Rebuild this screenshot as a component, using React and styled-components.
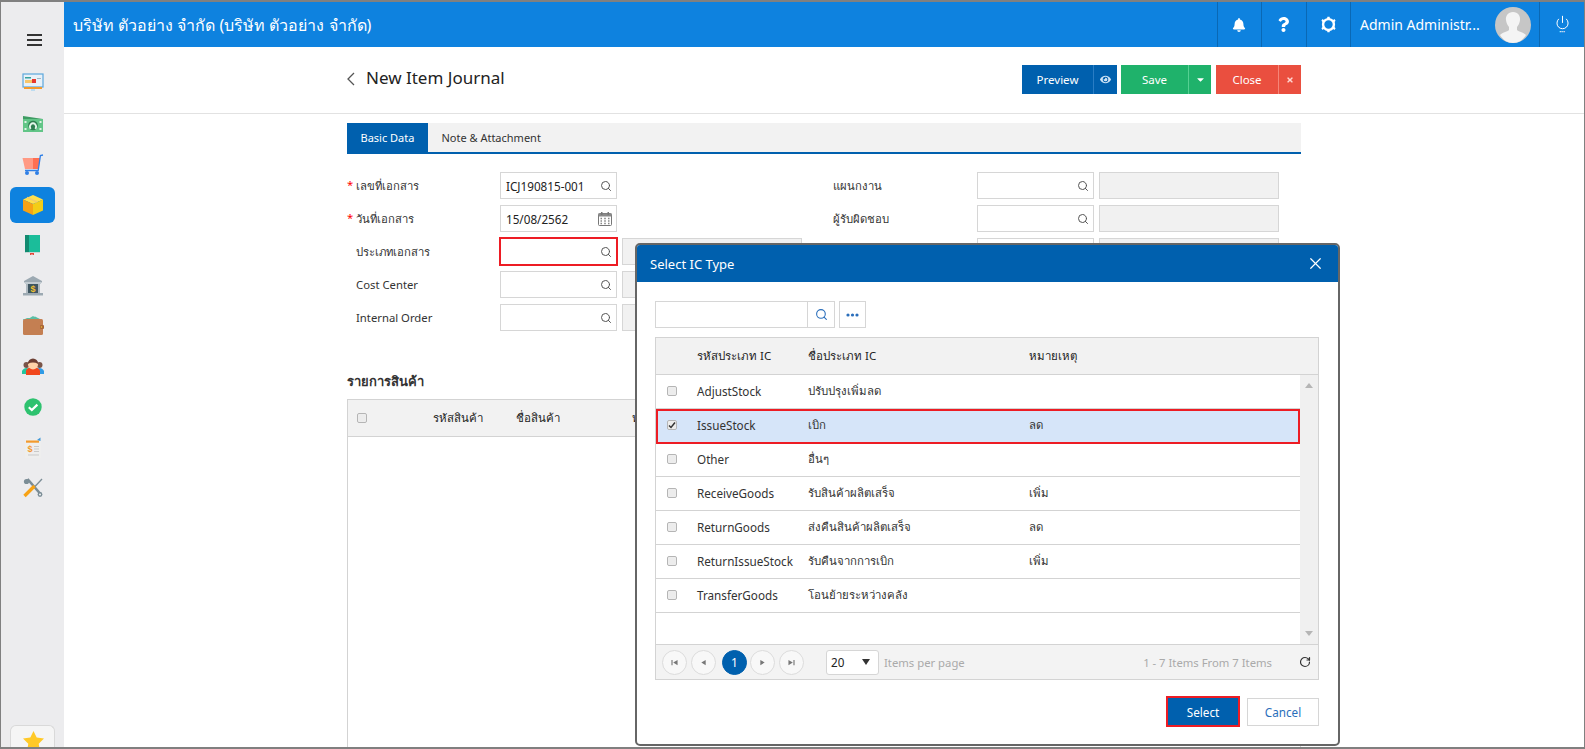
import React from "react";
import styled, { createGlobalStyle } from "styled-components";
import { FaBell, FaQuestion, FaCaretDown, FaTimes, FaEye } from "react-icons/fa";
import { Search, Power, RotateCw, X } from "lucide-react";

const FONT = `"Noto Sans", "Open Sans", "DejaVu Sans", sans-serif`;

const GlobalStyle = createGlobalStyle`
  * { box-sizing: border-box; }
  body { margin: 0; background: #fff; font-family: ${FONT}; font-size: 11.7px; color: #333; }
`;

const IconMonitor = () => (
  <svg width="22" height="20" viewBox="0 0 22 20">
    <rect x="1" y="1" width="20" height="13" fill="#e8f1f8" stroke="#5ba7dd" strokeWidth="1.2" />
    <rect x="2" y="14" width="18" height="2" fill="#f39a2d" />
    <rect x="9" y="16" width="4" height="2" fill="#bcdcf1" />
    <rect x="3" y="4" width="6" height="1.5" fill="#37a3a0" />
    <rect x="3" y="7" width="7" height="3" fill="#f7c66b" />
    <rect x="10" y="6" width="4" height="4" fill="#e8382c" />
    <rect x="15" y="5" width="4" height="1" fill="#9fb6c6" />
  </svg>
);
const IconMoney = () => (
  <svg width="22" height="18" viewBox="0 0 22 18">
    <path d="M1 1 L21 4 V17 H1 Z" fill="#3f9c63" />
    <rect x="1" y="4" width="20" height="13" fill="#62c587" />
    <circle cx="11" cy="10.5" r="4.8" fill="#2e7d4f" />
    <path d="M8.6 14 a3 3.600 0 1 1 4.800 0" fill="none" stroke="#e4f6ea" strokeWidth="1.8" />
    <rect x="2.500" y="6" width="2" height="2" fill="#dff3e6" />
    <rect x="17.500" y="6" width="2" height="2" fill="#dff3e6" />
    <rect x="2.500" y="13" width="2" height="2" fill="#dff3e6" />
    <rect x="17.500" y="13" width="2" height="2" fill="#dff3e6" />
  </svg>
);
const IconCart = () => (
  <svg width="22" height="21" viewBox="0 0 22 21">
    <path d="M0.5 4 H11 V15 H3 Z" fill="#ff9a84" />
    <path d="M11 4 H18 L16.5 15 H11 Z" fill="#ff6f52" />
    <path d="M21 1 L18.4 1.6 L16.2 16.5 H3" fill="none" stroke="#2f7fe6" strokeWidth="1.3" />
    <circle cx="5" cy="19" r="2" fill="#2f7fe6" />
    <circle cx="15" cy="19" r="2" fill="#2f7fe6" />
  </svg>
);
const IconBox = () => (
  <svg width="22" height="22" viewBox="0 0 22 22">
    <path d="M11 1 L21 5.5 L11 10 L1 5.5 Z" fill="#ffe04d" />
    <path d="M1 5.5 L11 10 V21 L1 16.5 Z" fill="#f7a215" />
    <path d="M21 5.5 L11 10 V21 L21 16.5 Z" fill="#f3cd17" />
    <path d="M5 3.5 L15 8" stroke="#f3cd6a" strokeWidth="1.5" />
  </svg>
);
const IconBook = () => (
  <svg width="17" height="20" viewBox="0 0 17 20">
    <path d="M2 0 H16 V18 H3 a2 2 0 0 1 -2 -2 V1 Z" fill="#1bbd9a" />
    <rect x="1" y="0" width="4" height="17" fill="#128a70" />
    <rect x="2" y="17" width="14" height="1" fill="#c9d6d3" />
    <path d="M6 18 H10 V20.5 L8 19.2 L6 20.5 Z" fill="#e8463a" />
  </svg>
);
const IconBank = () => (
  <svg width="22" height="20" viewBox="0 0 22 20">
    <path d="M11 0 L20 5 V6.5 H2 V5 Z" fill="#9ca9b2" />
    <rect x="3" y="6.5" width="16" height="1.5" fill="#c2ccd2" />
    <rect x="4" y="8" width="3" height="9" fill="#aeb9c0" />
    <rect x="15" y="8" width="3" height="9" fill="#aeb9c0" />
    <rect x="6" y="8" width="10" height="9" fill="#3f5661" />
    <rect x="1" y="17" width="20" height="2.5" fill="#9ca9b2" />
    <text x="11" y="15.8" textAnchor="middle" fontSize="9" fontWeight="700" fontFamily="Liberation Sans" fill="#f2c230">$</text>
  </svg>
);
const IconWallet = () => (
  <svg width="22" height="20" viewBox="0 0 22 20">
    <path d="M3 5 L11 0 L19 5 Z" fill="#5bbfa5" />
    <rect x="1" y="3" width="20" height="16" rx="1.5" fill="#c47f52" />
    <path d="M1 4 L5 2 H10 L13 0.5 L18 3 H1 Z" fill="#5bbfa5" />
    <rect x="18" y="9" width="4" height="4" rx="1" fill="#a86538" />
    <circle cx="19.5" cy="11" r="0.8" fill="#f2c230" />
  </svg>
);
const IconPeople = () => (
  <svg width="22" height="19" viewBox="0 0 22 19">
    <circle cx="4.5" cy="8" r="3" fill="#7a5448" />
    <circle cx="17.5" cy="8" r="3" fill="#7a5448" />
    <path d="M0 17 a4.5 4.5 0 0 1 7 -5 V17 Z" fill="#22c7a0" />
    <path d="M22 17 a4.5 4.5 0 0 0 -7 -5 V17 Z" fill="#2f9be6" />
    <path d="M4 16.5 V14 a7 4 0 0 1 14 0 V18 H4 Z" fill="#f1471d" />
    <circle cx="11" cy="7.5" r="5" fill="#ffd3a8" />
    <path d="M5.8 7 a5.2 5.6 0 0 1 10.4 0 a8 5 0 0 0 -10.4 0 Z" fill="#6d3f33" />
  </svg>
);
const IconCheck = () => (
  <svg width="18" height="18" viewBox="0 0 18 18">
    <circle cx="9" cy="9" r="8.7" fill="#2ec26f" />
    <path d="M4.8 9.3 L7.8 12 L13.4 6.6" fill="none" stroke="#fff" strokeWidth="2.2" />
  </svg>
);
const IconDoc = () => (
  <svg width="18" height="21" viewBox="0 0 18 21">
    <rect x="1" y="2" width="16" height="19" fill="#eeeeee" />
    <rect x="2" y="3.5" width="13" height="2.2" fill="#f39a2d" />
    <path d="M13 3 L16.5 0.5 V4 Z" fill="#3f97d8" />
    <text x="6" y="15" textAnchor="middle" fontSize="9" fontWeight="700" fontFamily="Liberation Sans" fill="#f39a2d">$</text>
    <path d="M10 9.5 H15 M10 12 H15 M10 14.5 H15 M4 18 H15" stroke="#c9c9c9" strokeWidth="1" />
  </svg>
);
const IconTools = () => (
  <svg width="20" height="20" viewBox="0 0 20 20">
    <path d="M4.5 1 L17.5 16" stroke="#7b8d96" strokeWidth="2.6" />
    <circle cx="3.5" cy="3.5" r="2.6" fill="#7b8d96" />
    <circle cx="17" cy="16.5" r="2.4" fill="#7b8d96" />
    <circle cx="17" cy="16.5" r="0.9" fill="#fff" />
    <path d="M19 1 L11 9.5" stroke="#7b8d96" strokeWidth="1.3" />
    <path d="M11.5 8 L1.5 18" stroke="#f7a215" strokeWidth="3.4" />
  </svg>
);
const IconStar = () => (
  <svg width="21" height="20" viewBox="0 0 21 20">
    <path d="M10.5 0 L13.7 6.6 L21 7.6 L15.7 12.7 L17 20 L10.5 16.5 L4 20 L5.3 12.7 L0 7.6 L7.3 6.6 Z" fill="#ffc928" />
  </svg>
);
const IconGear = () => (
  <svg width="17" height="17" viewBox="0 0 17 17">
    <circle cx="8.5" cy="8.5" r="5.4" fill="none" stroke="#fff" strokeWidth="2.4" />
    <path d="M7.4 0.8 H9.6 L10 3 H7 Z M7.4 16.2 H9.6 L10 14 H7 Z M1.400 4.800 L2.600 3 L4.400 4.400 L3 6.400 Z M15.600 4.800 L14.400 3 L12.600 4.400 L14 6.400 Z M1.400 12.200 L2.600 14 L4.400 12.600 L3 10.600 Z M15.600 12.200 L14.400 14 L12.600 12.600 L14 10.600 Z" fill="#fff" />
  </svg>
);
const IconCalendar = () => (
  <svg width="14" height="14" viewBox="0 0 14 14">
    <rect x="0.5" y="1.500" width="13" height="12" rx="1" fill="#fff" stroke="#777" />
    <rect x="0.5" y="1.500" width="13" height="3" fill="#8a8a8a" />
    <rect x="3" y="0" width="1.500" height="3" fill="#777" />
    <rect x="9.500" y="0" width="1.500" height="3" fill="#777" />
    <path d="M2.500 6.500 H4 M6.200 6.500 H7.800 M10 6.500 H11.500 M2.500 9 H4 M6.200 9 H7.800 M10 9 H11.500 M2.500 11.500 H4 M6.200 11.500 H7.800 M10 11.500 H11.500" stroke="#888" strokeWidth="1.300" />
  </svg>
);
const IconDots = () => (
  <svg width="13" height="4" viewBox="0 0 13 4">
    <circle cx="2" cy="2" r="1.600" fill="#2a6ebb" />
    <circle cx="6.500" cy="2" r="1.600" fill="#2a6ebb" />
    <circle cx="11" cy="2" r="1.600" fill="#2a6ebb" />
  </svg>
);
const IconTick = () => (
  <svg width="8" height="8" viewBox="0 0 8 8">
    <path d="M1 4.500 L3 6.500 L7 1.500" fill="none" stroke="#333" strokeWidth="1.500" />
  </svg>
);
const Avatar = () => (
  <svg width="36" height="36" viewBox="0 0 36 36">
    <circle cx="18" cy="18" r="18" fill="#c6c6c6" />
    <path d="M18 5 c5 0 7.500 4 7 8 c-.3 3 -1.500 5 -3 7 v3 c2 2 7 2.500 9 5 c-3 5 -7.500 8 -13 8 s-10 -3 -13 -8 c2 -2.500 7 -3 9 -5 v-3 c-1.500 -2 -2.700 -4 -3 -7 c-.5 -4 2 -8 7 -8 Z" fill="#f4f4f4" />
  </svg>
);

const sideIcons = [IconMonitor, IconMoney, IconCart, IconBox, IconBook, IconBank, IconWallet, IconPeople, IconCheck, IconDoc, IconTools];

const leftFields = [
  { label: "เลขที่เอกสาร", value: "ICJ190815-001", required: true },
  { label: "วันที่เอกสาร", value: "15/08/2562", required: true, date: true },
  { label: "ประเภทเอกสาร", value: "", wide: true, error: true },
  { label: "Cost Center", value: "", wide: true },
  { label: "Internal Order", value: "", wide: true },
];

const rightFields = [
  { label: "แผนกงาน", wide: true },
  { label: "ผู้รับผิดชอบ", wide: true },
  { label: "โครงการ", wide: true },
];

const types = [
  { code: "AdjustStock", name: "ปรับปรุงเพิ่มลด", note: "" },
  { code: "IssueStock", name: "เบิก", note: "ลด", selected: true },
  { code: "Other", name: "อื่นๆ", note: "" },
  { code: "ReceiveGoods", name: "รับสินค้าผลิตเสร็จ", note: "เพิ่ม" },
  { code: "ReturnGoods", name: "ส่งคืนสินค้าผลิตเสร็จ", note: "ลด" },
  { code: "ReturnIssueStock", name: "รับคืนจากการเบิก", note: "เพิ่ม" },
  { code: "TransferGoods", name: "โอนย้ายระหว่างคลัง", note: "" },
];

function Field({ field }) {
  return (
    <FieldRow>
      <FieldLabel>
        <Required>{field.required ? "*" : ""}</Required>
        {field.label}
      </FieldLabel>
      <InputBox $error={field.error}>
        <span>{field.value}</span>
        {field.date ? <IconCalendar /> : <Search size={12} color="#555" />}
      </InputBox>
      {field.wide && <DisabledBox />}
    </FieldRow>
  );
}

export default function App() {
  return (
    <Frame>
      <GlobalStyle />
      <Sidebar>
        <Burger><i /><i /><i /></Burger>
        <SideList>
          {sideIcons.map((Icon, i) => (
            <SideItem key={i} $active={i === 3}><Icon /></SideItem>
          ))}
        </SideList>
        <FavTab><IconStar /></FavTab>
      </Sidebar>

      <Main>
        <TopBar>
          <CompanyName>บริษัท ตัวอย่าง จำกัด (บริษัท ตัวอย่าง จำกัด)</CompanyName>
          <TopCell><FaBell size={14} /></TopCell>
          <TopCell><FaQuestion size={15} /></TopCell>
          <TopCell><IconGear /></TopCell>
          <UserCell>
            <UserName>Admin Administr...</UserName>
            <Avatar />
          </UserCell>
          <PowerCell>
            <Power size={15} strokeWidth={1.6} />
            <PowerDots>•••</PowerDots>
          </PowerCell>
        </TopBar>

        <PageHead>
          <PageHeadInner>
            <PageTitle>
              <BackArrow viewBox="0 0 8 14"><path d="M7 1 L1 7 L7 13" fill="none" stroke="#555" strokeWidth="1.3" /></BackArrow>
              New Item Journal
            </PageTitle>
            <Actions>
              <ActionGroup $bg="#0060ae" $line="#2a7dc4">
                <ActionMain $w={71}>Preview</ActionMain>
                <ActionSide $w={24}><FaEye size={11} color="#cfe3f5" /></ActionSide>
              </ActionGroup>
              <ActionGroup $bg="#1fb26b" $line="#55d092">
                <ActionMain $w={67}>Save</ActionMain>
                <ActionSide $w={23}><FaCaretDown size={11} /></ActionSide>
              </ActionGroup>
              <CloseGroup $bg="#ea4f3f" $line="#f58578">
                <ActionMain $w={62}>Close</ActionMain>
                <ActionSide $w={23}><FaTimes size={8} color="#ffd7d2" /></ActionSide>
              </CloseGroup>
            </Actions>
          </PageHeadInner>
        </PageHead>

        <Content>
          <Tabs>
            <Tab $active>Basic Data</Tab>
            <Tab>Note &amp; Attachment</Tab>
          </Tabs>
          <FormGrid>
            <FieldColumn>
              {leftFields.map((f) => <Field key={f.label} field={f} />)}
            </FieldColumn>
            <FieldColumn>
              {rightFields.map((f) => <Field key={f.label} field={f} />)}
            </FieldColumn>
          </FormGrid>
          <SectionTitle>รายการสินค้า</SectionTitle>
          <GoodsTable>
            <GoodsHead>
              <CheckBox />
              <span>รหัสสินค้า</span>
              <span>ชื่อสินค้า</span>
              <span>หน่วยนับ</span>
            </GoodsHead>
          </GoodsTable>
        </Content>
      </Main>

      <Modal>
        <ModalTitle>
          Select IC Type
          <X size={19} strokeWidth={1.5} />
        </ModalTitle>
        <ModalBody>
          <SearchRow>
            <SearchInput />
            <SearchBtn><Search size={13} color="#2a6ebb" /></SearchBtn>
            <MoreBtn><IconDots /></MoreBtn>
          </SearchRow>
          <TypeTable>
            <TypeHead>
              <span />
              <span>รหัสประเภท IC</span>
              <span>ชื่อประเภท IC</span>
              <span>หมายเหตุ</span>
            </TypeHead>
            <TypeBody>
              <TypeRows>
                {types.map((t) => (
                  <TypeRow key={t.code} $selected={t.selected}>
                    <CheckBox>{t.selected && <IconTick />}</CheckBox>
                    <span>{t.code}</span>
                    <span>{t.name}</span>
                    <span>{t.note}</span>
                  </TypeRow>
                ))}
              </TypeRows>
              <ScrollTrack>
                <ScrollArrow $up />
                <ScrollArrow />
              </ScrollTrack>
            </TypeBody>
            <Pager>
              <PageBtn><PagerGlyph viewBox="0 0 8 8"><path d="M0.500 1 H1.800 V7 H0.500 Z M7.500 1 V7 L2.500 4 Z" /></PagerGlyph></PageBtn>
              <PageBtn><PagerGlyph viewBox="0 0 8 8"><path d="M6.500 1 V7 L1.500 4 Z" /></PagerGlyph></PageBtn>
              <PageBtn $active>1</PageBtn>
              <PageBtn><PagerGlyph viewBox="0 0 8 8"><path d="M1.500 1 V7 L6.500 4 Z" /></PagerGlyph></PageBtn>
              <PageBtn><PagerGlyph viewBox="0 0 8 8"><path d="M0.500 1 V7 L5.500 4 Z M6.200 1 H7.500 V7 H6.200 Z" /></PagerGlyph></PageBtn>
              <PerPage>20<PerPageArrow /></PerPage>
              <PagerNote>Items per page</PagerNote>
              <PagerCount>1 - 7 Items From 7 Items</PagerCount>
              <RotateCw size={12} color="#333" strokeWidth={2.4} />
            </Pager>
          </TypeTable>
          <ModalActions>
            <SelectBtn>Select</SelectBtn>
            <CancelBtn>Cancel</CancelBtn>
          </ModalActions>
        </ModalBody>
      </Modal>
    </Frame>
  );
}

const Frame = styled.div`
  position: relative;
  display: flex;
  width: 1585px;
  height: 749px;
  overflow: hidden;
  border: solid #808080;
  border-width: 2px 1px 2px 1px;
  background: #fff;
`;

const Sidebar = styled.aside`
  flex: 0 0 63px;
  display: flex;
  flex-direction: column;
  background: #ececee;
`;

const Burger = styled.div`
  display: flex;
  flex-direction: column;
  gap: 3px;
  width: 15px;
  margin: 32px 0 0 26px;
  i { display: block; height: 2px; background: #333; }
`;

const SideList = styled.div`
  display: flex;
  flex-direction: column;
  gap: 4.500px;
  margin: 19px 0 0 9px;
`;

const SideItem = styled.div`
  display: flex;
  align-items: center;
  justify-content: center;
  width: 45px;
  height: 36px;
  border-radius: 6px;
  background: ${(p) => (p.$active ? "#0e82df" : "transparent")};
`;

const FavTab = styled.div`
  display: flex;
  justify-content: center;
  align-items: flex-start;
  width: 45px;
  height: 22px;
  overflow: hidden;
  margin: auto 0 0 9px;
  padding: 5px 0 0 2px;
  border: 1px solid #d9d9d9;
  border-bottom: 0;
  border-radius: 6px 6px 0 0;
  background: #f5f5f5;
`;

const Main = styled.main`
  flex: 1;
  min-width: 0;
  display: flex;
  flex-direction: column;
`;

const TopBar = styled.header`
  flex: 0 0 45px;
  display: flex;
  align-items: stretch;
  background: #0e82df;
  color: #fff;
`;

const CompanyName = styled.div`
  flex: 1;
  align-self: center;
  padding-left: 9px;
  font-size: 16px;
  line-height: 20px;
  white-space: nowrap;
`;

const TopCell = styled.div`
  flex: 0 0 44.500px;
  display: flex;
  align-items: center;
  justify-content: center;
  border-left: 1px solid #0a68b4;
`;

const UserCell = styled.div`
  flex: 0 0 189px;
  display: flex;
  align-items: center;
  padding: 0 8px 0 9px;
  border-left: 1px solid #0a68b4;
`;

const UserName = styled.span`
  flex: 1;
  font-size: 14px;
  white-space: nowrap;
`;

const PowerCell = styled.div`
  flex: 0 0 45px;
  display: flex;
  flex-direction: column;
  align-items: center;
  justify-content: center;
  border-left: 1px solid #0a68b4;
`;

const PowerDots = styled.span`
  font-size: 5px;
  line-height: 5px;
  letter-spacing: 0;
`;

const PageHead = styled.div`
  flex: 0 0 67px;
  border-bottom: 1px solid #e2e2e2;
  padding-left: 283px;
`;

const PageHeadInner = styled.div`
  display: flex;
  align-items: flex-start;
  justify-content: space-between;
  width: 954px;
  padding-top: 18px;
`;

const PageTitle = styled.h1`
  display: flex;
  align-items: center;
  gap: 11px;
  margin: 0;
  height: 25px;
  font-size: 17px;
  font-weight: 400;
  color: #222;
`;

const BackArrow = styled.svg`
  width: 8px;
  height: 14px;
  margin-top: 3px;
`;

const Actions = styled.div`
  display: flex;
  gap: 4px;
`;

const ActionGroup = styled.div`
  display: flex;
  height: 29px;
  background: ${(p) => p.$bg};
  color: #fff;
  font-size: 11.500px;
  > div + div { border-left: 1px solid ${(p) => p.$line}; }
`;

const CloseGroup = styled(ActionGroup)`
  margin-left: 1px;
`;

const ActionMain = styled.div`
  width: ${(p) => p.$w}px;
  display: flex;
  align-items: center;
  justify-content: center;
`;

const ActionSide = styled(ActionMain)``;

const Content = styled.div`
  flex: 1;
  min-height: 0;
  padding: 9px 0 0 283px;
  width: 1237px;
`;

const Tabs = styled.div`
  display: flex;
  height: 31px;
  background: #f2f2f2;
  border-bottom: 2px solid #0060ae;
`;

const Tab = styled.div`
  display: flex;
  align-items: center;
  padding: 0 13.500px;
  height: 29px;
  font-size: 11px;
  background: ${(p) => (p.$active ? "#0060ae" : "transparent")};
  color: ${(p) => (p.$active ? "#fff" : "#333")};
`;

const FormGrid = styled.div`
  display: flex;
  gap: 21px;
  margin-top: 18px;
  height: 160px;
`;

const FieldColumn = styled.div`
  flex: 0 0 456px;
  display: flex;
  flex-direction: column;
  gap: 6px;
`;

const FieldRow = styled.div`
  display: flex;
  align-items: center;
  height: 27px;
`;

const FieldLabel = styled.label`
  flex: 0 0 153px;
  display: flex;
  font-size: 11.300px;
  color: #333;
`;

const Required = styled.span`
  flex: 0 0 9px;
  color: #f00;
`;

const InputBox = styled.div`
  flex: 0 0 117px;
  height: 27px;
  display: flex;
  align-items: center;
  justify-content: space-between;
  padding: 0 4px 0 5px;
  background: #fff;
  border: 1px solid #d6d6d6;
  font-size: 11.700px;
  color: #222;
  ${(p) => p.$error && "outline: 2px solid #ed1c24; outline-offset: -1px;"}
`;

const DisabledBox = styled.div`
  flex: 0 0 180px;
  height: 27px;
  margin-left: 5px;
  background: #f1f1f1;
  border: 1px solid #d6d6d6;
`;

const SectionTitle = styled.h2`
  margin: 39px 0 0;
  height: 20px;
  font-size: 13px;
  font-weight: 700;
  line-height: 20px;
  color: #333;
`;

const GoodsTable = styled.div`
  margin-top: 8px;
  height: 400px;
  border: 1px solid #d3d3d3;
`;

const GoodsHead = styled.div`
  display: grid;
  grid-template-columns: 76px 83px 116px 1fr;
  align-items: center;
  height: 37px;
  padding-left: 9px;
  background: #f2f2f2;
  border-bottom: 1px solid #d3d3d3;
  color: #222;
  font-size: 11.500px;
`;

const CheckBox = styled.span`
  display: flex;
  align-items: center;
  justify-content: center;
  width: 10px;
  height: 10px;
  border: 1px solid #b5b5b5;
  border-radius: 2px;
  background: #ececec;
  box-shadow: inset 0 0 1px #fff;
`;

const Modal = styled.section`
  position: absolute;
  left: 634px;
  top: 241px;
  width: 705px;
  height: 503px;
  display: flex;
  flex-direction: column;
  background: #fff;
  border: 2px solid #666;
  border-radius: 5px;
  overflow: hidden;
`;

const ModalTitle = styled.div`
  flex: 0 0 37px;
  display: flex;
  align-items: center;
  justify-content: space-between;
  padding: 0 13px;
  background: #0060ae;
  color: #fff;
  font-size: 13px;
`;

const ModalBody = styled.div`
  flex: 1;
  padding: 19px 19px 0 18px;
`;

const SearchRow = styled.div`
  display: flex;
  height: 27px;
`;

const SearchInput = styled.div`
  width: 153px;
  border: 1px solid #d6d6d6;
`;

const SearchBtn = styled.div`
  width: 27px;
  display: flex;
  align-items: center;
  justify-content: center;
  border: 1px solid #d6d6d6;
  border-left: 0;
`;

const MoreBtn = styled(SearchBtn)`
  margin-left: 4px;
  border-left: 1px solid #d6d6d6;
`;

const TypeTable = styled.div`
  margin-top: 9px;
  height: 343px;
  display: flex;
  flex-direction: column;
  border: 1px solid #d3d3d3;
`;

const TypeHead = styled.div`
  flex: 0 0 37px;
  display: grid;
  grid-template-columns: 41px 111px 221px 1fr;
  align-items: center;
  background: #f2f2f2;
  border-bottom: 1px solid #d3d3d3;
  color: #222;
  font-size: 11.500px;
`;

const TypeBody = styled.div`
  flex: 1;
  min-height: 0;
  display: flex;
  border-bottom: 1px solid #d3d3d3;
`;

const TypeRows = styled.div`
  flex: 1;
`;

const TypeRow = styled.div`
  position: relative;
  height: 34px;
  display: grid;
  grid-template-columns: 30px 111px 221px 1fr;
  align-items: center;
  padding: 0 0 2px 11px;
  border-bottom: 1px solid #d3d3d3;
  color: #333;
  background: ${(p) => (p.$selected ? "#d6e5f9" : "transparent")};
  > span:nth-child(3), > span:nth-child(4) { font-size: 11.400px; }
  &::after {
    content: "";
    display: ${(p) => (p.$selected ? "block" : "none")};
    position: absolute;
    inset: 0 0 -2px 0;
    border: 2px solid #ed1c24;
  }
`;

const ScrollTrack = styled.div`
  flex: 0 0 18px;
  display: flex;
  flex-direction: column;
  justify-content: space-between;
  align-items: center;
  padding: 8px 0;
  background: #f0f0f0;
`;

const ScrollArrow = styled.i`
  width: 0;
  height: 0;
  border-left: 4px solid transparent;
  border-right: 4px solid transparent;
  ${(p) => (p.$up ? "border-bottom: 5px solid #b5b5b5;" : "border-top: 5px solid #b5b5b5;")}
`;

const Pager = styled.div`
  flex: 0 0 34px;
  display: flex;
  align-items: center;
  gap: 4px;
  padding: 0 7px 0 6px;
  background: #f3f3f3;
`;

const PageBtn = styled.div`
  display: flex;
  align-items: center;
  justify-content: center;
  width: 25px;
  height: 25px;
  margin: ${(p) => (p.$active ? "0 -1px 0 2px" : "0")};
  border-radius: 50%;
  border: 1px solid ${(p) => (p.$active ? "#0060ae" : "#dcdcdc")};
  background: ${(p) => (p.$active ? "#0060ae" : "#f8f8f8")};
  color: #fff;
  font-size: 12px;
`;

const PagerGlyph = styled.svg`
  width: 7px;
  height: 7px;
  fill: #777;
`;

const PerPage = styled.div`
  position: relative;
  display: flex;
  align-items: center;
  width: 53px;
  height: 25px;
  margin-left: 18px;
  padding-left: 4px;
  background: #fff;
  border: 1px solid #d6d6d6;
  border-radius: 3px;
  color: #222;
`;

const PerPageArrow = styled.i`
  margin-left: auto;
  margin-right: 8px;
  border-left: 4px solid transparent;
  border-right: 4px solid transparent;
  border-top: 6px solid #333;
`;

const PagerNote = styled.span`
  margin-left: 1px;
  font-size: 11.300px;
  color: #aaa;
`;

const PagerCount = styled.span`
  margin-left: auto;
  margin-right: 23px;
  font-size: 11.300px;
  color: #aaa;
`;

const ModalActions = styled.div`
  display: flex;
  align-items: center;
  justify-content: flex-end;
  gap: 7px;
  margin-top: 16px;
`;

const SelectBtn = styled.div`
  display: flex;
  align-items: center;
  justify-content: center;
  width: 74px;
  height: 31px;
  background: #0060ae;
  border: 2px solid #ed1c24;
  color: #fff;
`;

const CancelBtn = styled.div`
  display: flex;
  align-items: center;
  justify-content: center;
  width: 72px;
  height: 28px;
  background: #fff;
  border: 1px solid #d6d6d6;
  color: #2a6ebb;
`;
